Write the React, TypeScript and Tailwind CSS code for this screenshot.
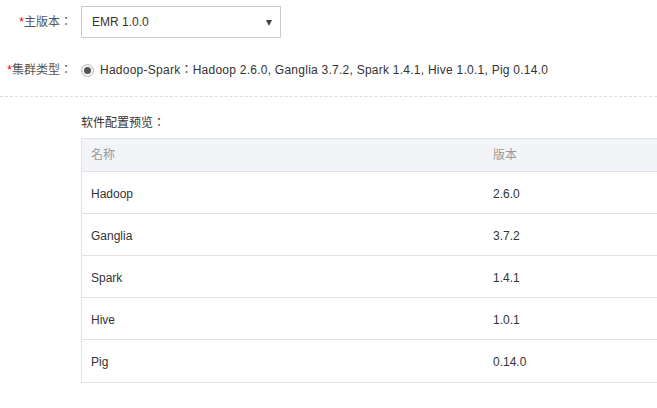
import React from 'react';

const rows = [
  { name: 'Hadoop', version: '2.6.0' },
  { name: 'Ganglia', version: '3.7.2' },
  { name: 'Spark', version: '1.4.1' },
  { name: 'Hive', version: '1.0.1' },
  { name: 'Pig', version: '0.14.0' },
];

const font = { fontFamily: '"Liberation Sans", "Noto Sans CJK TC", sans-serif' };

const App: React.FC = () => {
  return (
    <div className="w-[657px] h-[408px] overflow-hidden bg-white text-[12px] text-[#333]" style={font}>
      {/* 主版本 */}
      <div className="flex items-center h-[32px] mt-[6px]">
        <div className="w-[81px] pr-[9px] text-right text-[#555]">
          <span className="text-[#e00]">*</span>主版本：
        </div>
        <div className="relative flex items-center w-[200px] h-[32px] border border-[#ccc] pl-[10px]">
          EMR 1.0.0
          <span className="absolute right-[8px] top-[13px] w-0 h-0 border-l-[3.5px] border-r-[3.5px] border-t-[6px] border-l-transparent border-r-transparent border-t-[#444]"></span>
        </div>
      </div>

      {/* 集群类型 */}
      <div className="flex items-center h-[20px] mt-[22px]">
        <div className="w-[81px] pr-[9px] text-right text-[#555]">
          <span className="text-[#e00]">*</span>集群类型：
        </div>
        <span className="flex items-center justify-center w-[13px] h-[13px] rounded-full border border-[#bbb] bg-[#f4f4f4]">
          <span className="w-[7px] h-[7px] rounded-full bg-[#555]"></span>
        </span>
        <span className="ml-[6px] tracking-[0.25px]">Hadoop-Spark：Hadoop 2.6.0, Ganglia 3.7.2, Spark 1.4.1, Hive 1.0.1, Pig 0.14.0</span>
      </div>

      <div className="mt-[16px] border-t border-dashed border-[#ddd]"></div>

      {/* 软件配置预览 */}
      <div className="pl-[81px] pt-[17px]">
        <div className="h-[18px] leading-[18px]">软件配置预览：</div>
        <div className="mt-[6px] w-[600px] border-l border-b border-[#dfe3e8]">
          <div className="flex items-center h-[34px] bg-[#f3f4f8] border-t border-b border-[#dfe3e8] text-[#999]">
            <div className="w-[410px] pl-[9px]">名称</div>
            <div className="pl-[1px]">版本</div>
          </div>
          {rows.map((r, i) => (
            <div
              key={r.name}
              className={`flex items-center h-[42px] pt-[2px] ${i < rows.length - 1 ? 'border-b border-[#dfe3e8]' : ''}`}
            >
              <div className="w-[410px] pl-[9px]">{r.name}</div>
              <div className="pl-[1px]">{r.version}</div>
            </div>
          ))}
        </div>
      </div>
    </div>
  );
};

export default App;
